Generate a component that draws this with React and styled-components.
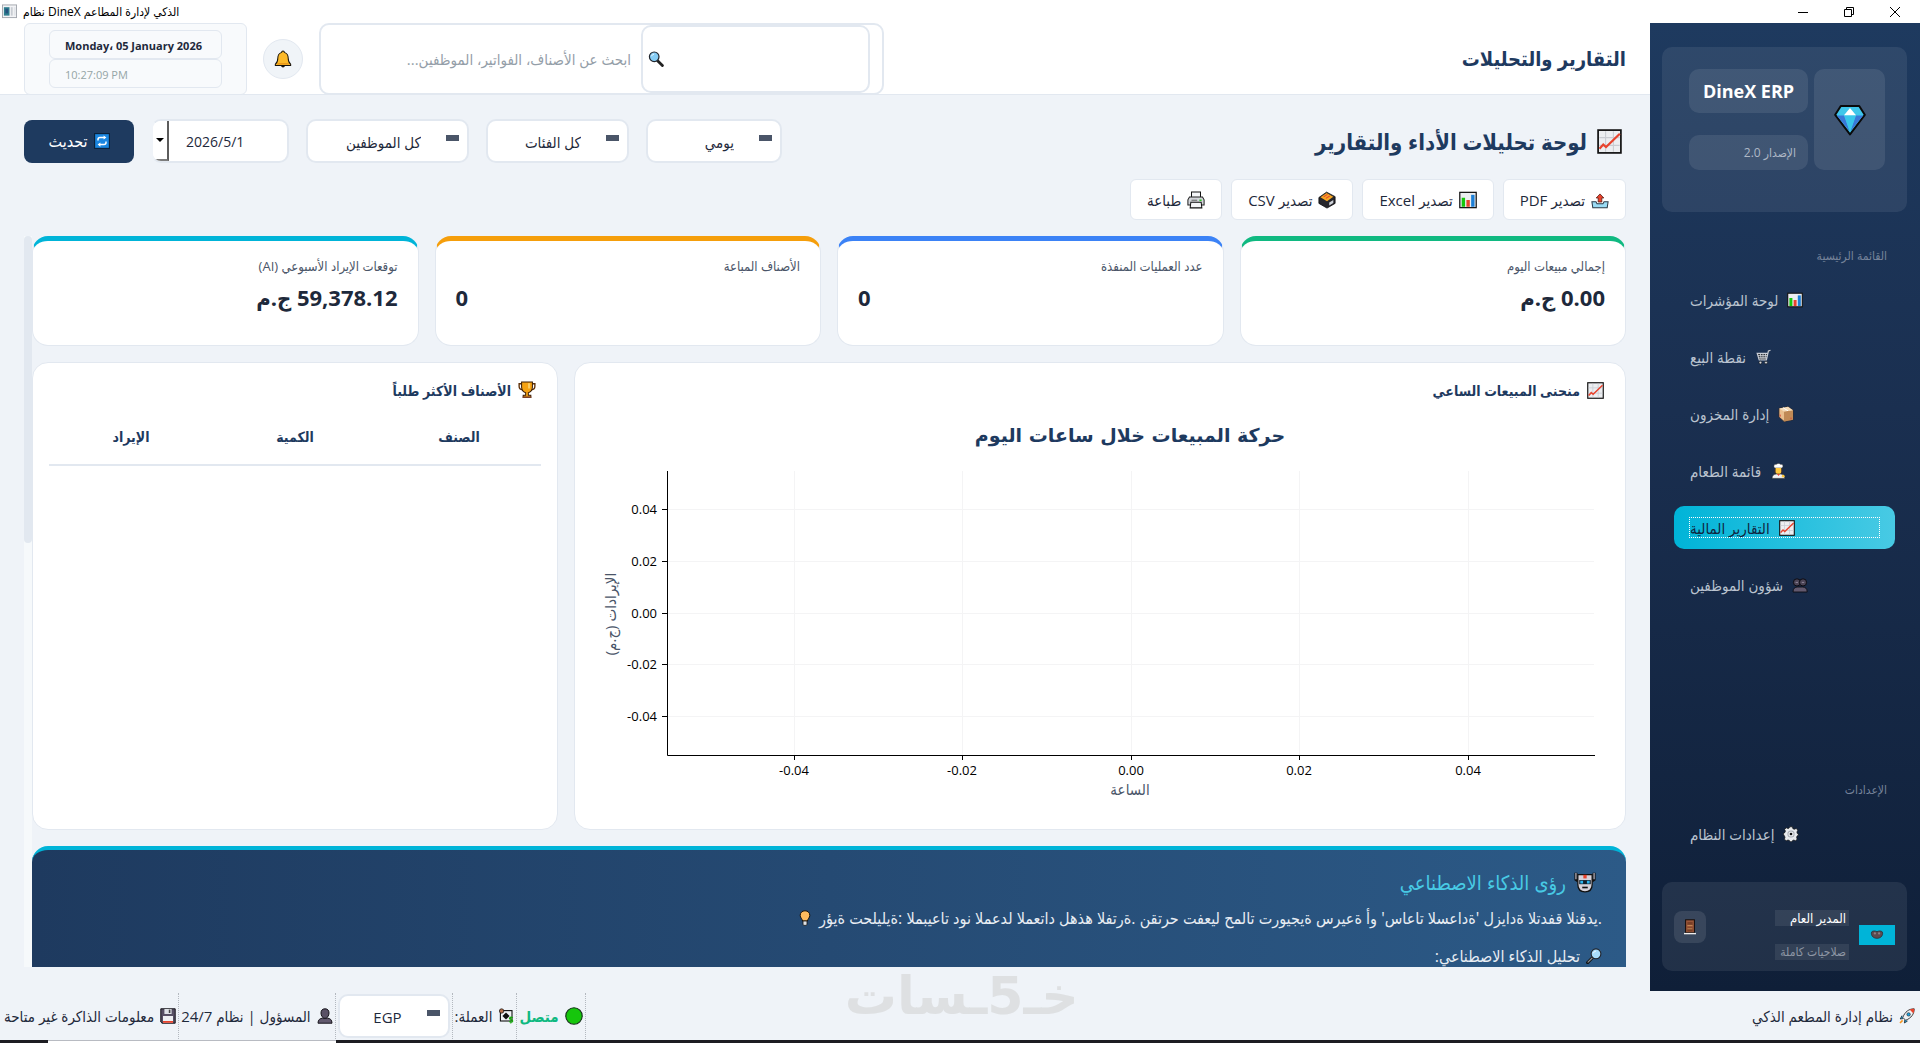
import { useState } from "react";
import styled, { createGlobalStyle } from "styled-components";

const GlobalStyle = createGlobalStyle`
  * {
    box-sizing: border-box;
  }
  body {
    margin: 0;
    background: #eff3f8;
  }
  body, button, input, select {
    font-family: "Open Sans", "DejaVu Sans Condensed", "DejaVu Sans", sans-serif;
  }
  h1, h2, h3, p {
    margin: 0;
  }
`;

/* ---------- icons ---------- */

const Svg = styled.svg`
  width: ${(p) => p.$size || 16}px;
  height: ${(p) => p.$size || 16}px;
  flex: none;
  display: block;
`;

const shapes = {
  trend: (
    <>
      <rect x="0.7" y="0.7" width="14.6" height="14.6" fill="#eceef1" stroke="#111" strokeWidth="1.1" />
      <path d="M5.5 1.5v13M10.5 1.5v13M1.5 5.5h13M1.5 10.5h13" stroke="#c9ccd2" strokeWidth="0.7" />
      <path d="M1.6 12.6 4 10l1.8 1.6L14.6 3" fill="none" stroke="#e8432d" strokeWidth="1.4" />
    </>
  ),
  bars: (
    <>
      <rect x="0.7" y="1.2" width="14.6" height="13.6" fill="#eceef1" stroke="#111" strokeWidth="1.1" />
      <rect x="2.4" y="6" width="3" height="8" fill="#16c60c" />
      <rect x="6.6" y="8" width="3" height="6" fill="#e8432d" />
      <rect x="10.8" y="3.4" width="3" height="10.6" fill="#1c7fd6" />
    </>
  ),
  cart: (
    <>
      <path d="M15.5 1.2 13.4 2l-2 9H4.2L2.2 4.4h10.6" fill="#30343c" stroke="#c8ccd3" strokeWidth="1.2" />
      <path d="M3 6.6h9.4M3.8 8.8h8.2M5.4 4.6l.8 6M8 4.6v6M10.6 4.6l-.6 6" stroke="#d7dae0" strokeWidth="0.8" />
      <circle cx="5.4" cy="13.6" r="1.4" fill="#d7dae0" stroke="#111" strokeWidth="0.6" />
      <circle cx="11" cy="13.6" r="1.4" fill="#d7dae0" stroke="#111" strokeWidth="0.6" />
    </>
  ),
  box: (
    <>
      <path d="M1 2.4 10 .8l5 3.4v9.6L6 15.4 1 11z" fill="#e9be8d" stroke="#3b2a20" strokeWidth="0.7" />
      <path d="M6 5.4 15 4.2v9.6L6 15.4z" fill="#c08a56" />
      <path d="M1 2.4 6 5.4l9-1.2L10 .8z" fill="#f4dcb9" />
      <path d="M5 1.7l5 3.1" stroke="#fff" strokeWidth="1" />
      <path d="M2.2 8.6v2M13 11.6v1.6" stroke="#d94436" strokeWidth="1" />
    </>
  ),
  cook: (
    <>
      <path d="M4.4 5.6h8v5h-8z" fill="#3b2e33" />
      <path d="M4.8 5C3 3.6 4 1 6 1.4 7.2.2 9.8.2 10.8 1.4 13 1 13.8 3.6 12 5z" fill="#fff" stroke="#333" strokeWidth="0.5" />
      <path d="M5.6 5h5.6v3.6a2.8 2.8 0 0 1-5.6 0z" fill="#ffc83d" />
      <path d="M2 15.400c0-3 2-4.400 4.400-4.400h4c2.600 0 4.400 1.400 4.400 4.400z" fill="#f3f3f5" stroke="#222" strokeWidth="0.6" />
      <path d="M7 11h3l-1.500 2z" fill="#e8432d" />
      <circle cx="13.2" cy="13.2" r="1.4" fill="#ffc83d" />
    </>
  ),
  people: (
    <>
      <path d="M1 15c0-3.600 1.800-5 4.800-5h4.600c3 0 4.800 1.400 4.800 5z" fill="#62596e" stroke="#0b0b12" strokeWidth="0.9" />
      <circle cx="5" cy="5.4" r="3.6" fill="#4b4455" stroke="#0b0b12" strokeWidth="1" />
      <circle cx="11" cy="5.4" r="3.6" fill="#4b4455" stroke="#0b0b12" strokeWidth="1" />
      <path d="M3.600 5.400h2.400M9.800 5.400h2.400" stroke="#8c8598" strokeWidth="1" />
    </>
  ),
  gear: (
    <>
      <path
        d="M6.600.8h2.800l.5 1.900 1.500.6L13.200 2.400l1.600 1.800-.9 1.900.4 1.400 1.100.5v1.200l-1.400.9-.4 1.400.6 1.700-1.700 1.500-1.800-.6-1.300.6-.6 1H7.200l-.8-1.200-1.400-.5-1.800.8-1.800-1.600.6-1.900-.5-1.300L.6 8.800V7.200l1.400-.8.4-1.300L1.600 3.400l1.600-1.600 1.900.8 1-.5z"
        fill="#e9ebee"
        stroke="#111"
        strokeWidth="0.7"
      />
      <circle cx="8" cy="8" r="3.6" fill="#a5a9b1" />
      <circle cx="8" cy="8" r="2.6" fill="#e9ebee" />
      <circle cx="8" cy="8" r="1.3" fill="#111" />
    </>
  ),
  gem: (
    <>
      <path d="M3.400 1h9.200L15.400 5.400 8 15.200.6 5.400z" fill="#3fc6ea" stroke="#0a0a0a" strokeWidth="1" strokeLinejoin="round" />
      <path d="M1.400 5.800h3.800L8 14z" fill="#3a78d8" />
      <path d="M14.600 5.800h-3.800L8 14z" fill="#3a78d8" />
      <path d="M5 5.700h6L8 14.200z" fill="#38c5ea" />
      <path d="M8 2 11 5.600H5z" fill="#fff" />
    </>
  ),
  door: (
    <>
      <rect x="3.6" y="0.8" width="8.8" height="13" fill="#9a5538" stroke="#120c0a" strokeWidth="1" />
      <path d="M5.400 3h5.200v3H5.400zM5.400 8.400h5.200v4H5.400z" fill="#7a3f27" />
      <path d="M5.400 6.400h5M5.400 9.800h5" stroke="#d09a5e" strokeWidth="0.8" />
      <path d="M2 14.600h12" stroke="#eee" strokeWidth="1.4" />
    </>
  ),
  mask: (
    <>
      <path d="M2 4.400c1.400-1.400 4-1.200 6-.2 2-1 4.600-1.200 6 .2 1 2 .2 4.600-1.600 6-1.800 1.200-3 1.400-4.400 1.400s-2.600-.2-4.400-1.400C1.800 9 1 6.400 2 4.400z" fill="#5d4b4f" stroke="#2b2326" strokeWidth="0.8" />
      <circle cx="5.6" cy="6.2" r="1.3" fill="#8d8085" />
      <circle cx="10.4" cy="6.2" r="1.3" fill="#8d8085" />
    </>
  ),
  rocket: (
    <>
      <path d="M3 7.600 1.200 11l3-.4M8.600 13 5.400 15l.4-3.200" fill="#1c9fe0" stroke="#111" strokeWidth="0.7" />
      <path d="M15.200.8C10 .8 6 3.600 3.800 9.400l2.900 2.900C12.400 10 15.200 6 15.200.8z" fill="#eef1f4" stroke="#111" strokeWidth="0.8" />
      <path d="M15.200.8c-2 0-3.200.2-4.600.8l3.800 3.800c.6-1.400.8-2.800.8-4.600z" fill="#e8432d" />
      <circle cx="9.6" cy="6.4" r="1.7" fill="#1c9fe0" stroke="#222" strokeWidth="0.6" />
      <path d="M3.600 12.400 1 15" stroke="#f7941d" strokeWidth="1.6" />
    </>
  ),
  bell: (
    <>
      <path d="M8 .8c.9 0 1.200.6 1.200 1.300 2.400.8 3.400 2.700 3.400 5 0 3 .6 4.300 2.200 5.500v1.200H1.200v-1.200c1.600-1.200 2.200-2.500 2.200-5.500 0-2.300 1-4.200 3.400-5C6.800 1.400 7.100.8 8 .8z" fill="#fcb928" stroke="#17120a" strokeWidth="0.9" />
      <path d="M3 12.300h10" stroke="#e38b12" strokeWidth="1" />
      <path d="M6.400 14h3.200c0 1-.7 1.500-1.600 1.500S6.400 15 6.400 14z" fill="#17120a" />
    </>
  ),
  search: (
    <>
      <path d="m9.600 9.800 4.800 4.800" stroke="#222" strokeWidth="2.8" strokeLinecap="round" />
      <circle cx="6.2" cy="5.8" r="4.8" fill="#86cdf5" stroke="#20242c" strokeWidth="1.2" />
      <path d="M3.600 5.200c.4-1.300 1.300-1.800 2.400-2" stroke="#fff" strokeWidth="1" fill="none" />
    </>
  ),
  searchRight: (
    <>
      <path d="m6.400 9.800-4.800 4.800" stroke="#111" strokeWidth="3" strokeLinecap="round" />
      <path d="m6.200 10-4.200 4.200" stroke="#8d8f96" strokeWidth="1.2" strokeLinecap="round" />
      <circle cx="10" cy="5.8" r="4.9" fill="#a9dcfa" stroke="#20242c" strokeWidth="1.1" />
      <path d="M7.400 5.200c.4-1.300 1.300-1.800 2.400-2" stroke="#fff" strokeWidth="1" fill="none" />
    </>
  ),
  refresh: (
    <>
      <rect x="0.6" y="0.6" width="14.8" height="14.8" fill="#1b86e0" stroke="#0b2038" strokeWidth="1.1" />
      <path d="M4 7.600V6.400C4 5 4.800 4.400 6 4.400h4.400M12 8.400v1.200c0 1.400-.8 2-2 2H5.600" fill="none" stroke="#fff" strokeWidth="1.5" />
      <path d="M9.600 2.400 12.400 4.400 9.600 6.600zM6.400 9.400 3.600 11.600l2.800 2.200z" fill="#fff" />
    </>
  ),
  outbox: (
    <>
      <path d="M.8 9.600h3.600l1 1.800h5.200l1-1.800h3.600l-.8 5.200H1.600z" fill="#9bdcf5" stroke="#2b3a48" strokeWidth="0.9" />
      <path d="M8 2.600 11.400 6.200H9.600v3.600H6.400V6.200H4.600z" fill="#e8432d" stroke="#5a1a12" strokeWidth="0.7" />
    </>
  ),
  ballot: (
    <>
      <path d="M.8 5.800 7.600 1l7.600 4v6L8 15.200.8 11z" fill="#26262b" stroke="#0c0c0e" strokeWidth="0.7" />
      <path d="M2.200 5.600 7.600 1.800l6 3.200L8 9z" fill="#f5a623" />
      <path d="M5 5.200 8.400 3M7 6.600l3.400-2.200" stroke="#e8432d" strokeWidth="0.9" />
      <path d="M10 10.200 13.600 8v2.600L10 12.800z" fill="#cfd3da" />
    </>
  ),
  printer: (
    <>
      <path d="M4 .8h8v5H4z" fill="#f5f6f8" stroke="#111" strokeWidth="0.9" />
      <path d="M2.200 5.400h11.600l1.400 2.400v4.600H.8V7.800z" fill="#d4d6db" stroke="#222" strokeWidth="0.9" />
      <path d="M3.400 10h9.200l.6 5H2.800z" fill="#f5f6f8" stroke="#111" strokeWidth="0.9" />
      <path d="M4 8.200h5" stroke="#555" strokeWidth="0.8" />
      <path d="M11 8.200h2" stroke="#16c60c" strokeWidth="1.2" />
    </>
  ),
  trophy: (
    <>
      <path d="M3.400 2.400H1v2.200c0 2 1.200 3 3 3.200M12.600 2.400H15v2.200c0 2-1.200 3-3 3.200" fill="none" stroke="#5e2f06" strokeWidth="1.2" />
      <path d="M3.200.8h9.600v4.600c0 2.800-1.600 4.400-3.600 5v2.200h2.200v2H4.600v-2h2.200v-2.200c-2-.6-3.600-2.200-3.600-5z" fill="#f6a313" stroke="#3a1d06" strokeWidth="0.9" />
      <path d="M9.800 2v4.600" stroke="#ffdf8b" strokeWidth="1.2" />
      <path d="M4.200 14.400h7.600" stroke="#7a3f27" strokeWidth="1.4" />
    </>
  ),
  robot: (
    <>
      <path d="M1.400 1.200v5l1.600 1M14.600 1.200v5l-1.600 1" fill="none" stroke="#111" strokeWidth="2.2" />
      <path d="M1.400 1.400v4.600M14.600 1.400v4.600" fill="none" stroke="#b9b3be" strokeWidth="0.9" />
      <path d="M2.800 2.600h10.400v7.200c0 3.400-2 5.400-5.200 5.400s-5.200-2-5.200-5.400z" fill="#d6d2da" stroke="#111" strokeWidth="0.9" />
      <rect x="6.8" y="2.8" width="2.4" height="2.6" fill="#e8432d" />
      <rect x="3.800" y="6.600" width="8.4" height="3" fill="#10202c" />
      <rect x="4.6" y="7.100" width="2" height="2" fill="#2cb5f0" />
      <rect x="9.4" y="7.100" width="2" height="2" fill="#2cb5f0" />
      <path d="M6 12h4" stroke="#111" strokeWidth="1.2" />
    </>
  ),
  bulb: (
    <>
      <path d="M8 .8c3 0 4.800 2 4.800 4.600 0 2.400-2 3.400-2.400 5.600H5.600C5.200 8.800 3.200 7.800 3.200 5.400 3.200 2.800 5 .8 8 .8z" fill="#fdbb5e" stroke="#15100a" strokeWidth="1" />
      <path d="M6 11h4v3.200c0 .8-.8 1.200-2 1.200s-2-.4-2-1.200z" fill="#dfe3e8" stroke="#15100a" strokeWidth="0.8" />
    </>
  ),
  dot: <circle cx="8" cy="8" r="7.3" fill="#16c60c" stroke="#15321a" strokeWidth="1" />,
  exchange: (
    <>
      <rect x="2.4" y="2.6" width="11.6" height="10.4" fill="#f1f3f5" stroke="#111" strokeWidth="1.1" />
      <path d="M4.400 8 8 4.600 11.600 8 8 11.400z" fill="#111" />
      <circle cx="3.6" cy="3" r="2.2" fill="#b9714c" stroke="#111" strokeWidth="0.7" />
      <path d="M12.800 8.400v7M14.800 9.800c-1-1-3.400-.8-3.400.6s3.400 1 3.400 2.600-2.600 1.600-3.600.4" stroke="#16a80c" strokeWidth="1.1" fill="none" />
    </>
  ),
  person: (
    <>
      <path d="M1 15.200c0-3.400 2-5 4.600-5h4.800c2.600 0 4.600 1.600 4.600 5z" fill="#62596e" stroke="#16141b" strokeWidth="1" />
      <path d="M8 .8c2.600 0 4 1.600 4 4.200S10.400 10.400 8 10.400 4 7.600 4 5 5.400.8 8 .8z" fill="#5a5166" stroke="#16141b" strokeWidth="1" />
    </>
  ),
  floppy: (
    <>
      <path d="M.8.8h14.400v14.400H2L.8 14z" fill="#574f63" stroke="#16141b" strokeWidth="1" />
      <rect x="4.4" y="1" width="7.2" height="5" fill="#dfe2e6" />
      <rect x="8.8" y="1.6" width="1.6" height="3.4" fill="#444" />
      <rect x="3" y="8" width="10" height="6.8" fill="#eef0f2" />
      <rect x="3" y="13" width="10" height="1.8" fill="#e8432d" />
    </>
  ),
  app: (
    <>
      <rect x="0.5" y="1" width="15" height="13.5" fill="#f3f4f6" stroke="#a2a6ad" strokeWidth="1" />
      <rect x="2" y="3.4" width="6" height="9" fill="#2e7f8f" />
      <rect x="3.6" y="5" width="3" height="5" fill="#26527e" />
      <rect x="9.4" y="3.4" width="2" height="9" fill="#c8ccd3" />
      <rect x="12.6" y="3.4" width="2" height="9" fill="#e2e5ea" />
    </>
  ),
};

const Icon = ({ name, size }) => (
  <Svg viewBox="0 0 16 16" $size={size} aria-hidden="true">
    {shapes[name]}
  </Svg>
);

/* ---------- window frame ---------- */

const Window = styled.div`
  height: 100vh;
  display: flex;
  flex-direction: column;
  overflow: hidden;
  background: #eff3f8;
  color: #1e293b;
`;
const TitleBar = styled.div`
  direction: ltr;
  height: 23px;
  flex: none;
  display: flex;
  align-items: center;
  gap: 6px;
  padding: 0 18px 0 2px;
  background: #fff;
  color: #000;
  font-size: 12px;
`;
const WindowButtons = styled.div`
  margin-left: auto;
  display: flex;
  gap: 32px;
`;
const WindowButton = styled.button`
  width: 14px;
  height: 14px;
  padding: 0;
  border: 0;
  background: none;
`;
const Body = styled.div`
  flex: 1;
  min-height: 0;
  display: flex;
`;
const Taskbar = styled.div`
  direction: ltr;
  height: 3px;
  flex: none;
  padding-left: 48px;
  background: #1d1d22;
`;
const TaskbarPreview = styled.div`
  width: 288px;
  height: 3px;
  background: #fff;
  border-top: 1px solid #b8bbc2;
`;

/* ---------- sidebar ---------- */

const Sidebar = styled.aside`
  width: 270px;
  flex: none;
  display: flex;
  flex-direction: column;
  padding: 24px 13px 20px 12px;
  background: linear-gradient(#1e3a5f, #1a2f50 40%, #0f1f38);
`;
const Brand = styled.div`
  height: 165px;
  padding: 22px 22px 22px 27px;
  display: flex;
  gap: 6px;
  border-radius: 10px;
  background: rgba(255, 255, 255, 0.08);
`;
const BrandLogo = styled.div`
  width: 71px;
  height: 101px;
  display: flex;
  align-items: center;
  justify-content: center;
  border-radius: 10px;
  background: rgba(255, 255, 255, 0.09);
`;
const BrandText = styled.div`
  height: 101px;
  flex: 1;
  display: flex;
  flex-direction: column;
  justify-content: space-between;
`;
const BrandName = styled.div`
  height: 44px;
  display: flex;
  align-items: center;
  justify-content: center;
  border-radius: 10px;
  background: rgba(255, 255, 255, 0.09);
  color: #fff;
  font-size: 18px;
  font-weight: 700;
`;
const BrandVersion = styled.div`
  height: 35px;
  display: flex;
  align-items: center;
  padding: 0 12px;
  border-radius: 10px;
  background: rgba(255, 255, 255, 0.09);
  color: #aeb8c6;
  font-size: 12px;
`;
const SectionLabel = styled.h3`
  margin: ${(p) => (p.$bottom ? "auto" : "36px")} 20px 14px;
  line-height: 16px;
  font-size: 12px;
  font-weight: 400;
  color: #76839a;
`;
const Nav = styled.nav`
  display: flex;
  flex-direction: column;
  gap: 14px;
  padding: 0 12px;
`;
const NavButton = styled.button`
  height: 43px;
  padding: 0 16px;
  border: 0;
  border-radius: 10px;
  background: ${(p) => (p.$active ? "linear-gradient(90deg, #00b4d8, #48cae4)" : "transparent")};
  color: ${(p) => (p.$active ? "#10253f" : "#bac3cf")};
  font-size: 15px;
  cursor: pointer;
`;
const NavInner = styled.span`
  height: 19px;
  display: flex;
  align-items: center;
  justify-content: flex-end;
  gap: 9px;
  white-space: nowrap;
  outline: ${(p) => (p.$active ? "1px dotted #fff" : "none")};
`;
const UserCard = styled.div`
  height: 89px;
  margin-top: 27px;
  padding: 0 12px;
  display: flex;
  align-items: center;
  gap: 10px;
  border-radius: 10px;
  background: rgba(255, 255, 255, 0.08);
`;
const Avatar = styled.div`
  width: 36px;
  height: 20px;
  margin-top: 16px;
  display: flex;
  align-items: center;
  justify-content: center;
  background: #00b4d8;
`;
const UserText = styled.div`
  width: 74px;
  display: flex;
  flex-direction: column;
  gap: 18px;
  margin-top: 16px;
`;
const UserLine = styled.span`
  height: 16px;
  padding: 0 3px;
  line-height: 16px;
  white-space: nowrap;
  background: rgba(255, 255, 255, 0.08);
  color: ${(p) => (p.$muted ? "#8e97a5" : "#fff")};
  font-size: ${(p) => (p.$muted ? 12 : 13)}px;
`;
const LogoutButton = styled.button`
  width: 32px;
  height: 32px;
  margin-right: auto;
  padding: 0;
  display: flex;
  align-items: center;
  justify-content: center;
  border: 0;
  border-radius: 8px;
  background: rgba(255, 255, 255, 0.1);
`;

/* ---------- header ---------- */

const Main = styled.main`
  flex: 1;
  min-width: 0;
  display: flex;
  flex-direction: column;
`;
const Header = styled.header`
  height: 72px;
  flex: none;
  display: flex;
  align-items: center;
  gap: 16px;
  padding: 0 24px;
  background: #fff;
  border-bottom: 1px solid #e2e8f0;
`;
const HeaderTitle = styled.h1`
  margin-left: auto;
  color: #1e3a5f;
  font-size: 20px;
  font-weight: 600;
`;
const SearchBox = styled.label`
  width: 565px;
  height: 72px;
  padding: 0 12px 0 8px;
  display: flex;
  border: 2px solid #e2e8f0;
  border-radius: 10px;
`;
const SearchIcon = styled.span`
  width: 229px;
  padding: 0 5px;
  display: flex;
  align-items: center;
  justify-content: flex-end;
  border: 2px solid #e2e8f0;
  border-radius: 10px;
`;
const SearchInput = styled.input`
  flex: 1;
  min-width: 0;
  padding: 0 10px;
  border: 0;
  outline: 0;
  background: none;
  font-size: 15px;
  &::placeholder {
    color: #949ea8;
    opacity: 1;
  }
`;
const BellButton = styled.button`
  width: 40px;
  height: 40px;
  padding: 0;
  display: flex;
  align-items: center;
  justify-content: center;
  border: 1px solid #e2e8f0;
  border-radius: 50%;
  background: #f0f4f8;
`;
const Clock = styled.div`
  direction: ltr;
  width: 223px;
  height: 72px;
  padding: 6px 24px;
  border: 1px solid #e2e8f0;
  border-radius: 6px;
  background: #f8fafc;
`;
const ClockLine = styled.div`
  height: 29px;
  padding: 0 15px;
  line-height: 30px;
  border: 1px solid #e2e8f0;
  border-radius: 6px;
  white-space: nowrap;
  font-size: 11px;
  font-weight: ${(p) => (p.$muted ? 400 : 700)};
  color: ${(p) => (p.$muted ? "#95a5a6" : "#1e293b")};
`;

/* ---------- page ---------- */

const Page = styled.div`
  flex: 1;
  min-height: 0;
  display: flex;
  flex-direction: column;
  gap: 16px;
  padding: 24px;
`;
const Toolbar = styled.div`
  display: flex;
  align-items: center;
  gap: 17px;
`;
const PageTitle = styled.h2`
  margin-left: auto;
  display: flex;
  align-items: center;
  gap: 10px;
  padding-right: 4px;
  color: #1e3a5f;
  font-size: 22px;
  font-weight: 600;
`;
const Select = styled.select`
  appearance: none;
  width: ${(p) => p.$width}px;
  height: 44px;
  padding: 2px 46px 0 10px;
  border: 2px solid #e2e8f0;
  border-radius: 10px;
  background: linear-gradient(#4a5568, #4a5568) no-repeat right 8px top 14px / 13px 6px #fff;
  color: #1e293b;
  font-size: 15px;
`;
const DateField = styled.div`
  direction: ltr;
  width: 138px;
  height: 44px;
  display: flex;
  overflow: hidden;
  border: 2px solid #e2e8f0;
  border-left-color: #eff3f8;
  border-radius: 10px;
  background: #fff;
`;
const DateDrop = styled.button`
  width: 16px;
  padding: 0;
  border: 0;
  border-right: 2px solid #5c5c5c;
  border-bottom: 2px solid #7c7c7c;
  background: #fff;
`;
const DateInput = styled.input`
  flex: 1;
  min-width: 0;
  padding: 0 0 0 17px;
  border: 0;
  background: none;
  color: #1e293b;
  font-size: 14px;
`;
const RefreshButton = styled.button`
  width: 110px;
  height: 43px;
  display: flex;
  align-items: center;
  justify-content: center;
  gap: 6px;
  border: 0;
  border-radius: 8px;
  background: #1e3a5f;
  color: #fff;
  font-size: 16px;
`;
const ExportRow = styled.div`
  display: flex;
  gap: 9px;
`;
const ExportButton = styled.button`
  height: 41px;
  padding: 0 16px;
  display: flex;
  align-items: center;
  gap: 6px;
  border: 1px solid #e2e8f0;
  border-radius: 6px;
  background: #fff;
  color: #1e293b;
  font-size: 15px;
`;
const ScrollArea = styled.div`
  flex: 1;
  min-height: 0;
  display: flex;
`;
const ScrollContent = styled.div`
  flex: 1;
  min-width: 0;
  display: flex;
  flex-direction: column;
  gap: 16px;
  overflow: hidden;
`;
const ScrollTrack = styled.div`
  width: 8px;
  background: #f6f9fb;
`;
const ScrollThumb = styled.div`
  height: 42%;
  border-radius: 4px;
  background: #e2e8f0;
`;
const Cards = styled.div`
  display: grid;
  grid-template-columns: repeat(4, 1fr);
  gap: 16px;
`;
const StatCard = styled.div`
  height: 110px;
  padding: 16px 20px;
  display: flex;
  flex-direction: column;
  gap: 6px;
  border: 1px solid #e2e8f0;
  border-top: 5px solid ${(p) => p.$color};
  border-radius: 16px;
  background: #fff;
`;
const StatLabel = styled.span`
  line-height: 18px;
  color: #4a5568;
  font-size: 13px;
`;
const StatValue = styled.strong`
  line-height: 32px;
  text-align: ${(p) => (p.$count ? "left" : "right")};
  color: #1e293b;
  font-size: 22px;
`;
const Panels = styled.div`
  display: grid;
  grid-template-columns: 2fr 1fr;
  gap: 16px;
`;
const Panel = styled.section`
  min-width: 0;
  height: 468px;
  padding: 16px;
  border: 1px solid #e2e8f0;
  border-radius: 16px;
  background: #fff;
`;
const PanelTitle = styled.h3`
  height: 22px;
  display: flex;
  align-items: center;
  gap: 7px;
  padding-right: 5px;
  color: #1e3a5f;
  font-size: 14px;
  font-weight: 600;
`;
const Chart = styled.svg`
  display: block;
  width: 100%;
  direction: ltr;
  text {
    font-family: "Open Sans", "DejaVu Sans Condensed", "DejaVu Sans", sans-serif;
  }
`;
const ItemsTable = styled.table`
  width: 100%;
  margin-top: 14px;
  table-layout: fixed;
  border-collapse: collapse;
  th {
    height: 50px;
    padding: 0 0 6px;
    border-bottom: 2px solid #e2e8f0;
    color: #1e3a5f;
    font-size: 14px;
    font-weight: 600;
  }
`;
const Insights = styled.section`
  height: 260px;
  flex: none;
  padding: 19px 24px;
  border-top: 4px solid #00b4d8;
  border-radius: 16px;
  background: linear-gradient(90deg, #1e3a5f, #2c5a87);
  color: #e8edf3;
`;
const InsightsTitle = styled.h3`
  height: 26px;
  display: flex;
  align-items: center;
  gap: 8px;
  padding-right: 6px;
  color: #48cae4;
  font-size: 20px;
  font-weight: 400;
`;
const InsightLine = styled.p`
  height: 38px;
  display: flex;
  align-items: center;
  gap: 6px;
  font-size: 16px;
  white-space: nowrap;
`;
const VisualLine = styled(InsightLine)`
  direction: ltr;
  justify-content: flex-end;
  margin-top: 4px;
  span {
    unicode-bidi: bidi-override;
  }
`;

/* ---------- status bar ---------- */

const StatusBar = styled.footer`
  height: 49px;
  flex: none;
  display: flex;
  align-items: center;
  position: relative;
  padding: 0 3px 0 2px;
  font-size: 15px;
  white-space: nowrap;
`;
const StatusItem = styled.div`
  height: 46px;
  display: flex;
  align-items: center;
  gap: 6px;
  padding: 0 2px;
  border-right: ${(p) => (p.$plain ? "0" : "1px dotted #b3b8bf")};
  color: ${(p) => (p.$online ? "#10b981" : "#1e293b")};
  font-weight: ${(p) => (p.$online ? 700 : 400)};
`;
const Spacer = styled.div`
  flex: 1;
`;
const Watermark = styled.div`
  position: absolute;
  left: 44%;
  bottom: 14px;
  display: flex;
  color: #dee0e2;
  font-family: "DejaVu Sans", sans-serif;
  font-size: 52px;
  font-weight: 700;
  line-height: 60px;
`;

/* ---------- data ---------- */

const navItems = [
  { icon: "bars", label: "لوحة المؤشرات" },
  { icon: "cart", label: "نقطة البيع" },
  { icon: "box", label: "إدارة المخزون" },
  { icon: "cook", label: "قائمة الطعام" },
  { icon: "trend", label: "التقارير المالية" },
  { icon: "people", label: "شؤون الموظفين" },
];

const exportsList = [
  { icon: "outbox", label: "تصدير PDF" },
  { icon: "bars", label: "تصدير Excel" },
  { icon: "ballot", label: "تصدير CSV" },
  { icon: "printer", label: "طباعة" },
];

const stats = [
  { label: "إجمالي مبيعات اليوم", value: "0.00 ج.م", color: "#10b981" },
  { label: "عدد العمليات المنفذة", value: "0", color: "#3b82f6", count: true },
  { label: "الأصناف المباعة", value: "0", color: "#f59e0b", count: true },
  { label: "توقعات الإيراد الأسبوعي (AI)", value: "59,378.12 ج.م", color: "#00b4d8" },
];

const xTicks = [
  { at: 203, label: "-0.04" },
  { at: 371, label: "-0.02" },
  { at: 540, label: "0.00" },
  { at: 708, label: "0.02" },
  { at: 877, label: "0.04" },
];

const yTicks = [
  { at: 108, label: "0.04" },
  { at: 160, label: "0.02" },
  { at: 212, label: "0.00" },
  { at: 263, label: "-0.02" },
  { at: 315, label: "-0.04" },
];

const ChartTitle = styled.text`
  && {
    font-family: "DejaVu Sans", sans-serif;
  }
  font-size: 19px;
  font-weight: 700;
`;

const SalesChart = () => (
  <Chart viewBox="0 0 1018 410" role="img" aria-label="حركة المبيعات خلال ساعات اليوم">
    <ChartTitle x="539" y="41" textAnchor="middle" fill="#1e3a5f" direction="rtl">
      حركة المبيعات خلال ساعات اليوم
    </ChartTitle>
    {xTicks.map((t) => (
      <g key={t.at}>
        <path d={`M${t.at}.5 70V354`} stroke="#f4f4f5" />
        <path d={`M${t.at}.5 354v5`} stroke="#000" />
        <text x={t.at} y="374" textAnchor="middle" fontSize="13" fill="#000">
          {t.label}
        </text>
      </g>
    ))}
    {yTicks.map((t) => (
      <g key={t.at}>
        <path d={`M76 ${t.at}.5H1003`} stroke="#f4f4f5" />
        <path d={`M71 ${t.at}.5h5`} stroke="#000" />
        <text x="66" y={t.at + 5} textAnchor="end" fontSize="13" fill="#000">
          {t.label}
        </text>
      </g>
    ))}
    <path d="M76.5 70V354.5H1004" fill="none" stroke="#000" />
    <text x="539" y="394" textAnchor="middle" fontSize="15" fill="#4a5568" direction="rtl">
      الساعة
    </text>
    <text transform="translate(25 213) rotate(-90)" textAnchor="middle" fontSize="15" fill="#4a5568" direction="rtl">
      الإيرادات (ج.م)
    </text>
  </Chart>
);

const App = () => {
  const [active, setActive] = useState("التقارير المالية");

  return (
    <Window dir="rtl" lang="ar">
      <GlobalStyle />
      <TitleBar>
        <Icon name="app" size={15} />
        <span>نظام DineX الذكي لإدارة المطاعم</span>
        <WindowButtons>
          <WindowButton aria-label="تصغير">
            <Svg viewBox="0 0 14 14" $size={14}>
              <path d="M2 7.5h10" stroke="#000" />
            </Svg>
          </WindowButton>
          <WindowButton aria-label="استعادة">
            <Svg viewBox="0 0 14 14" $size={14}>
              <path d="M2.5 4.5h7v7h-7zM4.5 4.5v-2h7v7h-2" fill="none" stroke="#000" />
            </Svg>
          </WindowButton>
          <WindowButton aria-label="إغلاق">
            <Svg viewBox="0 0 14 14" $size={14}>
              <path d="m2 2 10 10M12 2 2 12" stroke="#000" />
            </Svg>
          </WindowButton>
        </WindowButtons>
      </TitleBar>

      <Body>
        <Sidebar>
          <Brand>
            <BrandLogo>
              <Icon name="gem" size={32} />
            </BrandLogo>
            <BrandText>
              <BrandName>DineX ERP</BrandName>
              <BrandVersion>الإصدار 2.0</BrandVersion>
            </BrandText>
          </Brand>
          <SectionLabel>القائمة الرئيسية</SectionLabel>
          <Nav>
            {navItems.map((item) => (
              <NavButton key={item.label} $active={active === item.label} onClick={() => setActive(item.label)}>
                <NavInner $active={active === item.label}>
                  <Icon name={item.icon} />
                  {item.label}
                </NavInner>
              </NavButton>
            ))}
          </Nav>
          <SectionLabel $bottom>الإعدادات</SectionLabel>
          <Nav>
            <NavButton>
              <NavInner>
                <Icon name="gear" />
                إعدادات النظام
              </NavInner>
            </NavButton>
          </Nav>
          <UserCard>
            <Avatar>
              <Icon name="mask" size={14} />
            </Avatar>
            <UserText>
              <UserLine>المدير العام</UserLine>
              <UserLine $muted>صلاحيات كاملة</UserLine>
            </UserText>
            <LogoutButton aria-label="تسجيل الخروج">
              <Icon name="door" />
            </LogoutButton>
          </UserCard>
        </Sidebar>

        <Main>
          <Header>
            <HeaderTitle>التقارير والتحليلات</HeaderTitle>
            <SearchBox>
              <SearchIcon>
                <Icon name="search" />
              </SearchIcon>
              <SearchInput placeholder="ابحث عن الأصناف، الفواتير، الموظفين..." />
            </SearchBox>
            <BellButton aria-label="الإشعارات">
              <Icon name="bell" size={18} />
            </BellButton>
            <Clock>
              <ClockLine>Monday، 05 January 2026</ClockLine>
              <ClockLine $muted>10:27:09 PM</ClockLine>
            </Clock>
          </Header>

          <Page>
            <Toolbar>
              <PageTitle>
                <Icon name="trend" size={25} />
                لوحة تحليلات الأداء والتقارير
              </PageTitle>
              <Select $width={136} aria-label="الفترة">
                <option>يومي</option>
              </Select>
              <Select $width={143} aria-label="الفئة">
                <option>كل الفئات</option>
              </Select>
              <Select $width={163} aria-label="الموظف">
                <option>كل الموظفين</option>
              </Select>
              <DateField>
                <DateDrop aria-label="اختيار التاريخ">
                  <Svg viewBox="0 0 14 14" $size={14}>
                    <path d="M3 5h8L7 9z" fill="#000" />
                  </Svg>
                </DateDrop>
                <DateInput aria-label="التاريخ" defaultValue="2026/5/1" />
              </DateField>
              <RefreshButton>
                <Icon name="refresh" />
                تحديث
              </RefreshButton>
            </Toolbar>

            <ExportRow>
              {exportsList.map((item) => (
                <ExportButton key={item.label}>
                  <Icon name={item.icon} size={18} />
                  {item.label}
                </ExportButton>
              ))}
            </ExportRow>

            <ScrollArea>
              <ScrollContent>
                <Cards>
                  {stats.map((s) => (
                    <StatCard key={s.label} $color={s.color}>
                      <StatLabel>{s.label}</StatLabel>
                      <StatValue $count={s.count}>{s.value}</StatValue>
                    </StatCard>
                  ))}
                </Cards>

                <Panels>
                  <Panel>
                    <PanelTitle>
                      <Icon name="trend" size={17} />
                      منحنى المبيعات الساعي
                    </PanelTitle>
                    <SalesChart />
                  </Panel>
                  <Panel>
                    <PanelTitle>
                      <Icon name="trophy" size={18} />
                      الأصناف الأكثر طلباً
                    </PanelTitle>
                    <ItemsTable>
                      <thead>
                        <tr>
                          <th>الصنف</th>
                          <th>الكمية</th>
                          <th>الإيراد</th>
                        </tr>
                      </thead>
                    </ItemsTable>
                  </Panel>
                </Panels>

                <Insights>
                  <InsightsTitle>
                    <Icon name="robot" size={22} />
                    رؤى الذكاء الاصطناعي
                  </InsightsTitle>
                  <VisualLine>
                    <Icon name="bulb" />
                    <span>
                      رؤية تحليلية: المبيعات دون المعدل المعتاد لهذه الفترة. نقترح تفعيل حملات ترويجية سريعة أو 'ساعات السعادة' لزيادة التدفق النقدي.
                    </span>
                  </VisualLine>
                  <InsightLine>
                    <Icon name="searchRight" />
                    تحليل الذكاء الاصطناعي:
                  </InsightLine>
                </Insights>
              </ScrollContent>
              <ScrollTrack>
                <ScrollThumb />
              </ScrollTrack>
            </ScrollArea>
          </Page>
        </Main>
      </Body>

      <StatusBar>
        <StatusItem $plain>
          <Icon name="rocket" />
          نظام إدارة المطعم الذكي
        </StatusItem>
        <Spacer />
        <StatusItem $online>
          <Icon name="dot" size={18} />
          متصل
        </StatusItem>
        <StatusItem>
          <Icon name="exchange" />
          العملة:
        </StatusItem>
        <StatusItem>
          <Select $width={112} aria-label="العملة">
            <option>EGP</option>
          </Select>
        </StatusItem>
        <StatusItem>
          <Icon name="person" />
          المسؤول | نظام 24/7
        </StatusItem>
        <StatusItem>
          <Icon name="floppy" />
          معلومات الذاكرة غير متاحة
        </StatusItem>
        <Watermark>
          <span>خـ</span>
          <span>5</span>
          <span>ـسات</span>
        </Watermark>
      </StatusBar>
      <Taskbar>
        <TaskbarPreview />
      </Taskbar>
    </Window>
  );
};

export default App;
